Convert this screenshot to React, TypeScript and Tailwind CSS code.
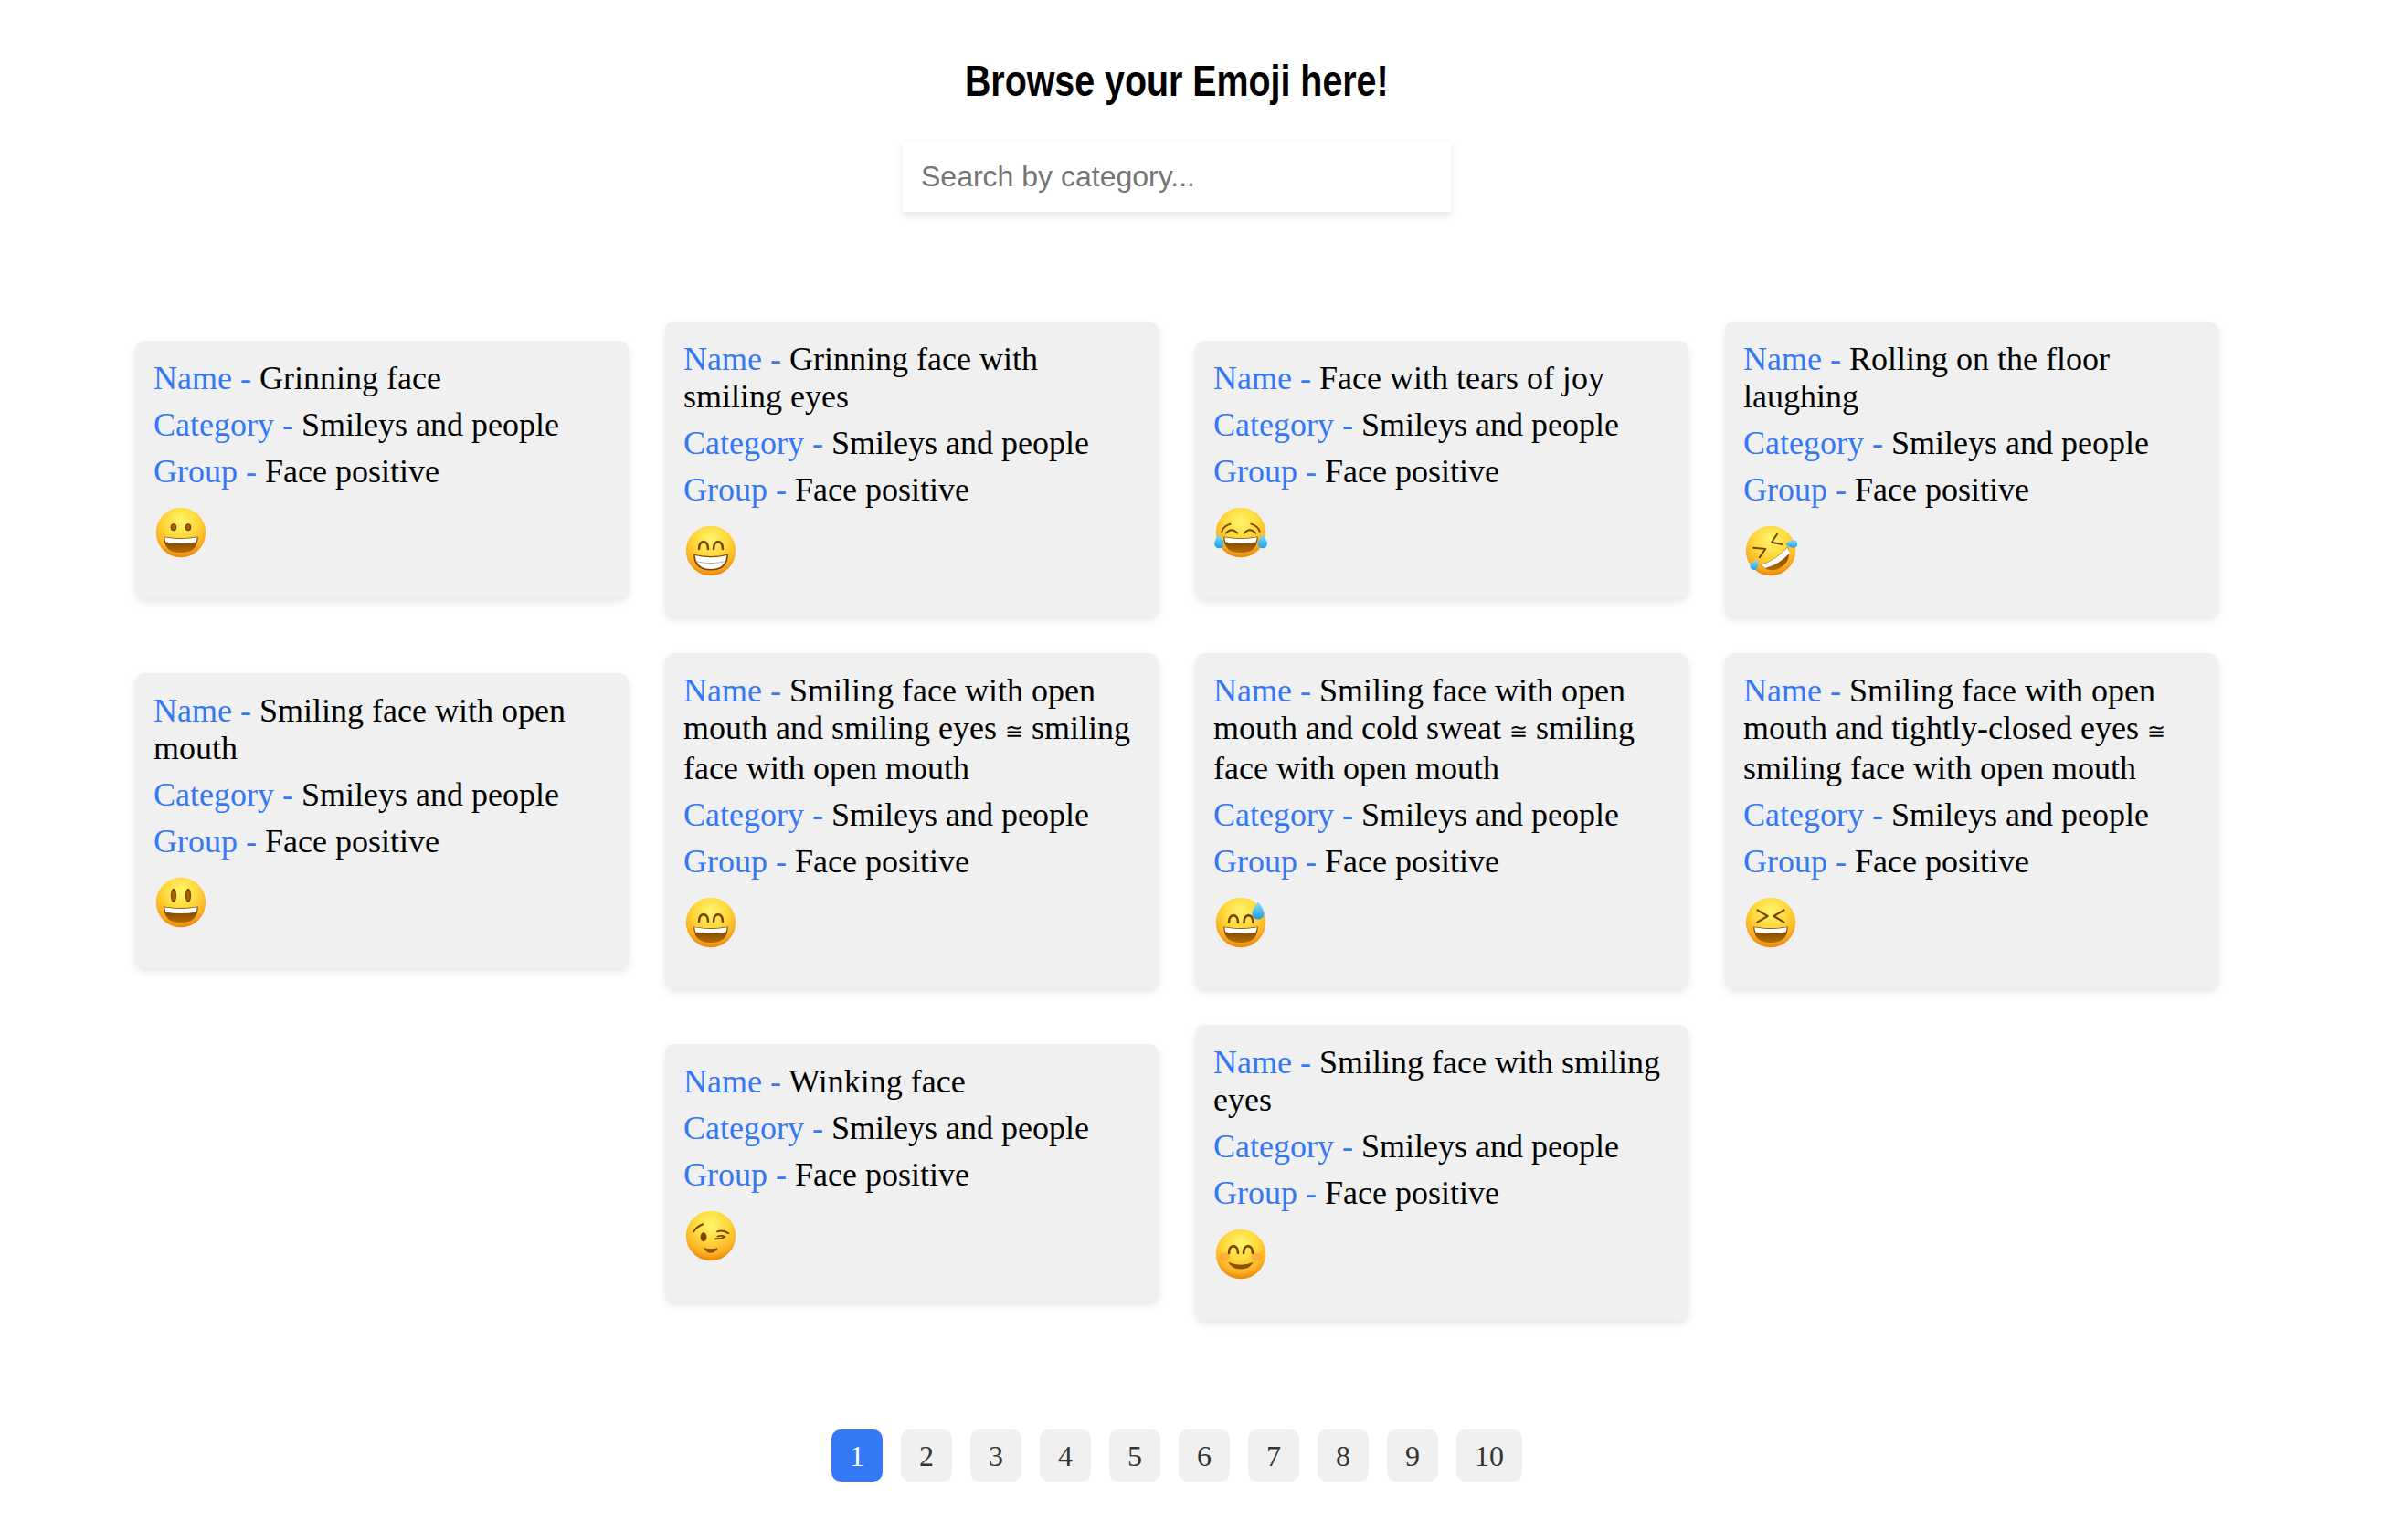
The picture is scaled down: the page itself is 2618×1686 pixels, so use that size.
import { ReactNode, useState } from "react";

const MOUTH = "#8a4f00";
const BROW = "#7a4300";

function FaceBase({ id, children }: { id: string; children: ReactNode }) {
  return (
    <svg width="60" height="60" viewBox="0 0 60 60" className="block">
      <defs>
        <radialGradient id={`skin-${id}`} cx="50%" cy="28%" r="74%">
          <stop offset="0%" stopColor="#fff56e" />
          <stop offset="45%" stopColor="#ffd93b" />
          <stop offset="78%" stopColor="#fcb125" />
          <stop offset="100%" stopColor="#e67e06" />
        </radialGradient>
        <linearGradient id={`drop-${id}`} x1="0" y1="0" x2="0" y2="1">
          <stop offset="0%" stopColor="#8fdcf8" />
          <stop offset="100%" stopColor="#1c9fe8" />
        </linearGradient>
        <linearGradient id={`mouth-${id}`} x1="0" y1="0" x2="0" y2="1">
          <stop offset="0%" stopColor="#6d3c00" />
          <stop offset="100%" stopColor="#b26b00" />
        </linearGradient>
      </defs>
      <circle cx="30" cy="30" r="27.2" fill={`url(#skin-${id})`} />
      {children}
    </svg>
  );
}

function OpenMouth({ id }: { id: string }) {
  return (
    <g>
      <path d="M11.3 34.4 Q30 38 48.7 34.4 Q49 52 30 52 Q11 52 11.3 34.4Z" fill={`url(#mouth-${id})`} />
      <path d="M12.2 35.2 Q30 38.8 47.8 35.2 L46.8 40.4 Q30 43.6 13.2 40.4Z" fill="#fff" />
    </g>
  );
}

function RoundEye({ x, y, rx = 3.3, ry = 4 }: { x: number; y: number; rx?: number; ry?: number }) {
  return (
    <g>
      <ellipse cx={x} cy={y} rx={rx} ry={ry} fill={BROW} />
      <ellipse cx={x} cy={y} rx={rx * 0.55} ry={ry * 0.7} fill="#a96400" />
    </g>
  );
}

function ArcEye({ x, y }: { x: number; y: number }) {
  return (
    <path
      d={`M${x - 5} ${y + 4} C${x - 5} ${y - 6.5} ${x + 5} ${y - 6.5} ${x + 5} ${y + 4}`}
      fill="none"
      stroke={BROW}
      strokeWidth="2.6"
      strokeLinecap="round"
    />
  );
}

function Grinning() {
  return (
    <FaceBase id="grinning">
      <RoundEye x={22} y={24.3} />
      <RoundEye x={38} y={24.3} />
      <OpenMouth id="grinning" />
    </FaceBase>
  );
}

function Beaming() {
  return (
    <FaceBase id="beaming">
      <ArcEye x={22} y={24} />
      <ArcEye x={38} y={24} />
      <path d="M11 33.5 Q30 38.5 49 33.5 Q49 51.5 30 51.5 Q11 51.5 11 33.5Z" fill="#7c4700" />
      <path d="M12.6 35 Q30 39.6 47.4 35 Q46 50 30 50 Q14 50 12.6 35Z" fill="#fff" />
      <path d="M13.6 41.6 Q30 45.6 46.4 41.6" fill="none" stroke="#b7b2a8" strokeWidth="1" />
    </FaceBase>
  );
}

function Joy() {
  return (
    <FaceBase id="joy">
      <path d="M9.3 29 Q11 23 18.7 20.7" fill="none" stroke={BROW} strokeWidth="1.8" strokeLinecap="round" />
      <path d="M50.7 29 Q49 23 41.3 20.7" fill="none" stroke={BROW} strokeWidth="1.8" strokeLinecap="round" />
      <path d="M13.7 30.7 Q20 23.6 26.3 30.7" fill="none" stroke={BROW} strokeWidth="2" strokeLinecap="round" />
      <path d="M46.3 30.7 Q40 23.6 33.7 30.7" fill="none" stroke={BROW} strokeWidth="2" strokeLinecap="round" />
      <OpenMouth id="joy" />
      <path d="M6 32 Q11.4 39 11.4 42 A5.2 5.2 0 0 1 1 42 Q1 39 6 32Z" fill="url(#drop-joy)" />
      <path d="M54 32 Q48.6 39 48.6 42 A5.2 5.2 0 0 0 59 42 Q59 39 54 32Z" fill="url(#drop-joy)" />
    </FaceBase>
  );
}

function Rofl() {
  return (
    <FaceBase id="rofl">
      <path d="M37 11.7 L31 20.7 L42.7 23" fill="none" stroke={BROW} strokeWidth="2" strokeLinecap="round" strokeLinejoin="round" />
      <path d="M11 26.7 L24.3 28 L17.7 37.3" fill="none" stroke={BROW} strokeWidth="2" strokeLinecap="round" strokeLinejoin="round" />
      <path d="M48.7 25.7 Q36 40 18.7 45.7 Q28 54 38 50 Q54 42 48.7 25.7Z" fill="url(#mouth-rofl)" />
      <path d="M48.4 26.4 L50.6 32.4 Q40 44.6 24 49 L19.4 45.8 Q36 40 48.4 26.4Z" fill="#fff" />
      <path d="M46 23 Q50 18.6 55 18 A4.4 4.4 0 0 1 56 26.6 Q51 27.2 46 23Z" fill="url(#drop-rofl)" />
      <path d="M16.3 40 Q17 46 14.5 50 A4.4 4.4 0 0 1 7.5 45.5 Q10 42 16.3 40Z" fill="url(#drop-rofl)" />
    </FaceBase>
  );
}

function Smiley() {
  return (
    <FaceBase id="smiley">
      <RoundEye x={22} y={22.4} rx={3.1} ry={7.6} />
      <RoundEye x={38} y={22.4} rx={3.1} ry={7.6} />
      <OpenMouth id="smiley" />
    </FaceBase>
  );
}

function SmilingOpen() {
  return (
    <FaceBase id="smiling">
      <ArcEye x={22} y={25} />
      <ArcEye x={38} y={25} />
      <OpenMouth id="smiling" />
    </FaceBase>
  );
}

function Sweat() {
  return (
    <FaceBase id="sweat">
      <ArcEye x={22} y={26} />
      <ArcEye x={38.5} y={26} />
      <OpenMouth id="sweat" />
      <path d="M49 7.4 Q55.6 16 55.6 20 A6.6 6.6 0 0 1 42.4 20 Q42.4 16 49 7.4Z" fill="url(#drop-sweat)" />
    </FaceBase>
  );
}

function Squint() {
  return (
    <FaceBase id="squint">
      <path d="M15.4 16.4 L26.6 23 L15.4 29.6" fill="none" stroke={BROW} strokeWidth="2.2" strokeLinecap="round" strokeLinejoin="round" />
      <path d="M44.6 16.4 L33.4 23 L44.6 29.6" fill="none" stroke={BROW} strokeWidth="2.2" strokeLinecap="round" strokeLinejoin="round" />
      <OpenMouth id="squint" />
    </FaceBase>
  );
}

function Winking() {
  return (
    <FaceBase id="winking">
      <path d="M11.3 25.3 Q14 20 21.3 17.3" fill="none" stroke={BROW} strokeWidth="2" strokeLinecap="round" />
      <ellipse cx="22" cy="31.3" rx="3.4" ry="5" fill={BROW} />
      <path d="M37 25.3 Q44 23 49.3 27.3" fill="none" stroke={BROW} strokeWidth="1.8" strokeLinecap="round" />
      <path d="M34.7 33.4 Q41 33.6 45.3 31 M37.5 30.6 Q42 29 45.3 31" fill="none" stroke={BROW} strokeWidth="1.8" strokeLinecap="round" />
      <path d="M22 43 Q30 45.6 38 43 Q35 48.8 30 48.8 Q25 48.8 22 43Z" fill={MOUTH} />
    </FaceBase>
  );
}

function Blush() {
  return (
    <FaceBase id="blush">
      <ellipse cx="12.5" cy="33" rx="6" ry="4.4" fill="#ff8f3c" opacity="0.45" />
      <ellipse cx="47.5" cy="33" rx="6" ry="4.4" fill="#ff8f3c" opacity="0.45" />
      <ArcEye x={22} y={25} />
      <ArcEye x={38} y={25} />
      <path d="M16.3 38.7 Q30 44.6 43.7 38.7 Q40 46.4 30 46.4 Q20 46.4 16.3 38.7Z" fill={MOUTH} />
    </FaceBase>
  );
}

const emojis = [
  { name: "Grinning face", icon: <Grinning /> },
  { name: "Grinning face with smiling eyes", icon: <Beaming /> },
  { name: "Face with tears of joy", icon: <Joy /> },
  { name: "Rolling on the floor laughing", icon: <Rofl /> },
  { name: "Smiling face with open mouth", icon: <Smiley /> },
  { name: "Smiling face with open mouth and smiling eyes ≅ smiling face with open mouth", icon: <SmilingOpen /> },
  { name: "Smiling face with open mouth and cold sweat ≅ smiling face with open mouth", icon: <Sweat /> },
  { name: "Smiling face with open mouth and tightly-closed eyes ≅ smiling face with open mouth", icon: <Squint /> },
  { name: "Winking face", icon: <Winking /> },
  { name: "Smiling face with smiling eyes", icon: <Blush /> },
];

function Field({ label, value }: { label: string; value: string }) {
  // the approx sign comes out small in the original, so it gets its own span
  const parts = value.split("≅");
  return (
    <p className="mb-[10px]">
      <span className="text-[#3478f6]">{label} - </span>
      {parts[0]}
      {parts.length > 1 && <span className="text-[24px] leading-[39px]">≅</span>}
      {parts[1]}
    </p>
  );
}

export default function App() {
  const [page, setPage] = useState(1);
  const pages = [1, 2, 3, 4, 5, 6, 7, 8, 9, 10];

  return (
    <div className="w-[2576px] min-h-[1686px] bg-white pt-[61px] font-['Liberation_Serif',serif] text-black">
      <div className="flex justify-center">
        <h1 className="scale-x-[0.82] whitespace-nowrap font-['Liberation_Sans',sans-serif] text-[48px] leading-[55px] font-bold">
          Browse your Emoji here!
        </h1>
      </div>

      <div className="mt-[39px] flex justify-center">
        <input
          placeholder="Search by category..."
          className="h-[77px] w-[600px] bg-white px-[20px] font-['Liberation_Sans',sans-serif] text-[32px] shadow-[0_4px_8px_rgba(0,0,0,0.1)] outline-none placeholder:text-[#757575]"
        />
      </div>

      <div className="mt-[100px] flex flex-wrap items-center justify-center">
        {emojis.map((emoji) => (
          <div
            key={emoji.name}
            className="m-[20px] w-[540px] rounded-[10px] bg-[#f0f0f0] px-[20px] pt-[21px] pb-[20px] text-[36px] leading-[41px] shadow-[0_4px_8px_rgba(0,0,0,0.1)]"
          >
            <Field label="Name" value={emoji.name} />
            <Field label="Category" value="Smileys and people" />
            <Field label="Group" value="Face positive" />
            <div className="h-[88px] pt-[6px]">{emoji.icon}</div>
          </div>
        ))}
      </div>

      <div className="mt-[100px] flex justify-center gap-[20px]">
        {pages.map((n) => (
          <button
            key={n}
            onClick={() => setPage(n)}
            className={
              n === page
                ? "h-[57px] rounded-[10px] bg-[#3478f6] px-[20px] text-[32px] text-white"
                : "h-[57px] rounded-[10px] bg-[#f0f0f0] px-[20px] text-[32px] text-[#333333]"
            }
          >
            {n}
          </button>
        ))}
      </div>
    </div>
  );
}
